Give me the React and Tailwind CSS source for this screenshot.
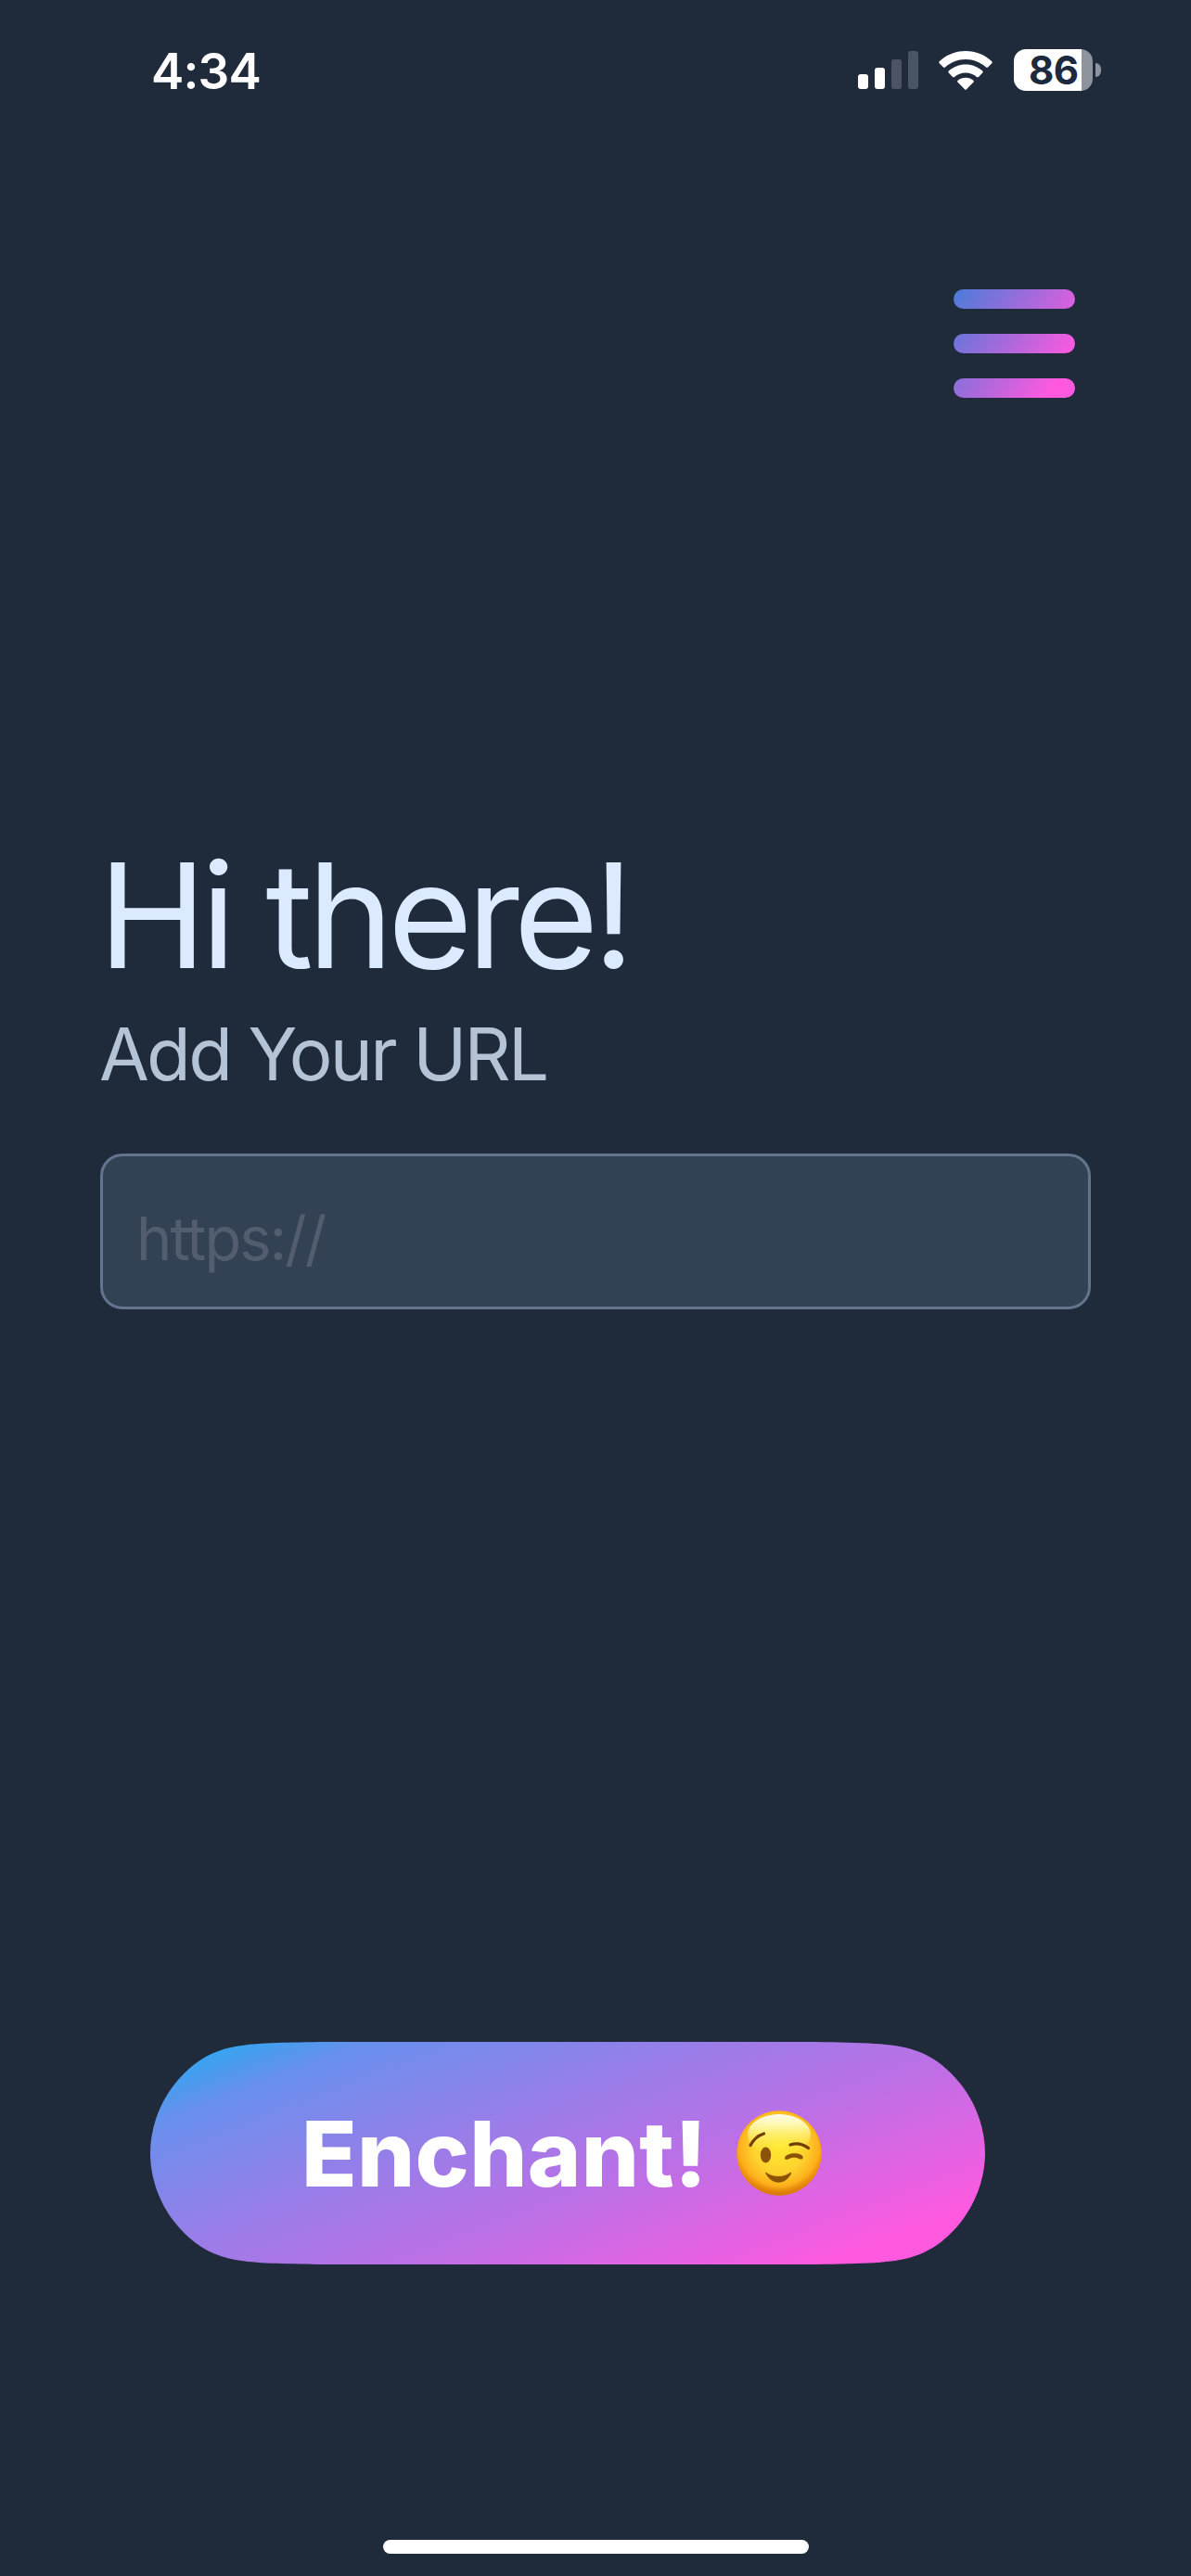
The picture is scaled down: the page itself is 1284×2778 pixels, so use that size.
import { useState } from 'react';

const SIGNAL_BARS = [
    { x: 0, y: 25, active: true },
    { x: 18, y: 18, active: true },
    { x: 36, y: 9, active: false },
    { x: 54, y: 0, active: false }
];

function SignalIcon() {
    return (
        <svg width="65" height="41" viewBox="0 0 65 41">
            {SIGNAL_BARS.map(bar => (
                <rect
                    key={bar.x}
                    x={bar.x}
                    y={bar.y}
                    width="11"
                    height={41 - bar.y}
                    rx="3"
                    fill={bar.active ? '#ffffff' : '#4b5462'}
                />
            ))}
        </svg>
    );
}

function WifiIcon() {
    return (
        <svg width="58" height="42" viewBox="0 0 58 42" fill="#ffffff">
            <path d="M29 0 C40 0 50 4.2 57.3 11.2 Q58.2 12.2 57.3 13.2 L53 17.6 Q52 18.5 51 17.6 C45 12 37.4 9 29 9 C20.6 9 13 12 7 17.6 Q6 18.5 5 17.6 L0.7 13.2 Q-0.2 12.2 0.7 11.2 C8 4.2 18 0 29 0 Z" />
            <path d="M29 14.5 C36 14.5 42.5 17.2 47.3 21.6 Q48.2 22.6 47.3 23.6 L43 27.9 Q42 28.8 41 27.9 C37.7 25 33.5 23.4 29 23.4 C24.5 23.4 20.3 25 17 27.9 Q16 28.8 15 27.9 L10.7 23.6 Q9.8 22.6 10.7 21.6 C15.5 17.2 22 14.5 29 14.5 Z" />
            <path d="M29 28.8 C32.3 28.8 35.2 30 37.4 31.8 Q38.3 32.7 37.4 33.7 L30 41.3 Q29 42.3 28 41.3 L20.6 33.7 Q19.7 32.7 20.6 31.8 C22.8 30 25.7 28.8 29 28.8 Z" />
        </svg>
    );
}

function Battery({ level }) {
    return (
        <div className="flex items-center gap-[3px]">
            <div className="flex h-[45px] w-[85px] items-center rounded-[13px] bg-[linear-gradient(90deg,#ffffff_73px,#8e949d_73px)] pl-[16px]">
                <span className="text-[42px] leading-[52px] font-bold tracking-[-0.5px] text-slate-800">{level}</span>
            </div>
            <div className="h-[15px] w-[6px] rounded-r-full bg-[#8e949d]" />
        </div>
    );
}

function StatusBar() {
    return (
        <header className="flex h-[151px] items-center justify-between pr-[97px] pl-[163px]">
            <span className="mt-[2px] text-[53px] leading-[60px] font-semibold tracking-[-0.8px] text-white">4:34</span>
            <div className="flex items-center">
                <SignalIcon />
                <div className="ml-[22px]"><WifiIcon /></div>
                <div className="ml-[23px]"><Battery level={86} /></div>
            </div>
        </header>
    );
}

function MenuIcon() {
    return (
        <svg width="131" height="117" viewBox="0 0 131 117">
            <defs>
                <linearGradient id="menu" gradientUnits="userSpaceOnUse" x1="0" y1="1" x2="124" y2="80">
                    <stop offset="0" stopColor="#4a7cd9" />
                    <stop offset="0.5" stopColor="#a36adb" />
                    <stop offset="1" stopColor="#ff59e0" />
                </linearGradient>
            </defs>
            {[0, 48, 96].map(y => (
                <rect key={y} y={y} width="131" height="21" rx="10.5" fill="url(#menu)" />
            ))}
        </svg>
    );
}

function WinkIcon() {
    return (
        <svg width="92" height="92" viewBox="0 0 92 92">
            <defs>
                <linearGradient id="wink-rim" x1="0" y1="0" x2="0" y2="1">
                    <stop offset="0" stopColor="#fdb50c" />
                    <stop offset="0.5" stopColor="#fb9b0a" />
                    <stop offset="1" stopColor="#d97a08" />
                </linearGradient>
                <radialGradient id="wink-face" cx="0.5" cy="0.42" r="0.56">
                    <stop offset="0" stopColor="#ffe92f" />
                    <stop offset="0.55" stopColor="#fed32e" />
                    <stop offset="0.85" stopColor="#fdb01c" />
                    <stop offset="1" stopColor="#f39a0d" stopOpacity="0" />
                </radialGradient>
                <linearGradient id="wink-shine" x1="0" y1="0" x2="0" y2="1">
                    <stop offset="0" stopColor="#fffdf0" />
                    <stop offset="0.3" stopColor="#fffbb0" stopOpacity="0.9" />
                    <stop offset="1" stopColor="#ffee33" stopOpacity="0" />
                </linearGradient>
            </defs>
            <circle cx="46" cy="46" r="45.7" fill="url(#wink-rim)" />
            <circle cx="46" cy="46" r="45" fill="url(#wink-face)" />
            <ellipse cx="46" cy="26" rx="34" ry="22" fill="url(#wink-shine)" />
            <g fill="none" stroke="#6f3d04" strokeLinecap="round">
                <path d="M15 37.5 Q20 28 29.5 25" strokeWidth="3.2" />
                <path d="M58 37 Q68 33.5 77.5 40.5" strokeWidth="3.2" />
            </g>
            <ellipse cx="31.5" cy="48" rx="5.7" ry="8.5" fill="#8c5306" />
            <path d="M52 51 C53 45 70 44.5 71.8 50 C72 53 69.5 53 67.5 52 C63 50 59.5 50.5 56 52.5 C53.5 53.5 52 53 52 51 Z" fill="#8c5306" />
            <path d="M31.5 66.5 C40 72.5 50 72.5 58.5 66.5 C59.5 66.5 59 68 58.5 69 C52 80.5 39 80.5 32 69 C31.3 68 31 66.5 31.5 66.5 Z" fill="#8c5306" />
        </svg>
    );
}

export default function App() {
    const [url, setUrl] = useState('');

    return (
        <div className="flex h-[2778px] w-[1284px] flex-col overflow-hidden bg-[#1f2a3b] font-['Inter','Liberation_Sans',sans-serif]">
            <StatusBar />
            <nav className="flex justify-end pt-[161px] pr-[125px]">
                <button aria-label="Menu"><MenuIcon /></button>
            </nav>
            <main className="mt-[470px] flex flex-col px-[108px]">
                <h1 className="-ml-[2px] text-[157px] leading-[176px] tracking-[-6.2px] whitespace-nowrap text-blue-100">Hi there!</h1>
                <h2 className="-ml-px mt-[14px] text-[78px] leading-[96px] tracking-[-2.7px] whitespace-nowrap text-[#b4c3d6]">Add Your URL</h2>
                <input
                    className="mt-[59px] h-[168px] w-full rounded-3xl border-[3px] border-slate-500 bg-[#334154] pt-[14px] pl-[36px] text-[65px] tracking-[-2px] text-blue-100 outline-none placeholder:text-[#525d70]"
                    placeholder="https://"
                    value={url}
                    onChange={e => setUrl(e.target.value)}
                />
            </main>
            {/* Capsule with continuous corners, the curves ease into the straight edges */}
            <button className="mt-[790px] ml-[162px] flex h-60 w-[900px] items-center bg-[linear-gradient(159deg,#3aa2f0_7%,#6691ec_15%,#728cec_20%,#9a7de8_40%,#bd6fe6_60%,#c96be5_65%,#db66e3_73%,#ec60e2_81%,#ff59df_89%)] pl-[163px] [clip-path:path('M183,0_L717,0_C769,1_800,1_824,9_C844,15.5_860.5,28.5_874.5,46.5_C890,66.5_900,93_900,120_C900,147_890,173.5_874.5,193.5_C860.5,211.5_844,224.5_824,231_C800,239_769,239_717,240_L183,240_C131,239_100,239_76,231_C56,224.5_39.5,211.5_25.5,193.5_C10,173.5_0,147_0,120_C0,93_10,66.5_25.5,46.5_C39.5,28.5_56,15.5_76,9_C100,1_131,1_183,0_Z')]">
                <span className="mt-[2px] w-[469px] text-left text-[98px] leading-none font-extrabold tracking-[0.3px] whitespace-nowrap text-white">Enchant!</span>
                <WinkIcon />
            </button>
            <div className="mt-[297px] h-[15px] w-[459px] self-center rounded-full bg-white" />
        </div>
    );
}
